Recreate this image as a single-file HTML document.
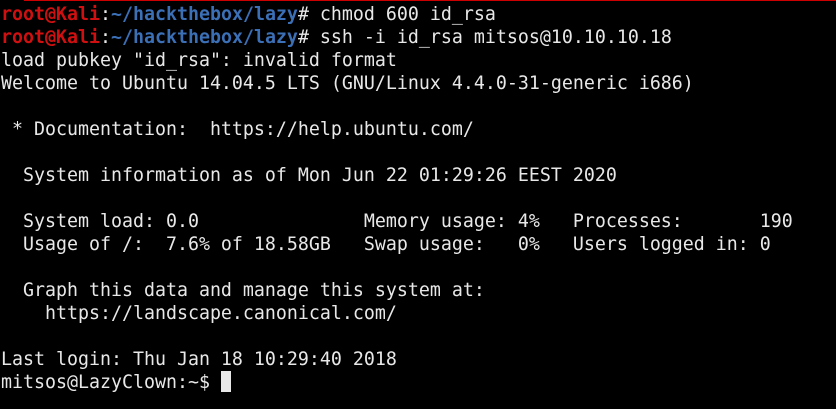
<!DOCTYPE html>
<html><head><style>
html,body{margin:0;padding:0;background:#000;width:836px;height:409px;overflow:hidden}
pre{margin:0;position:absolute;left:1px;top:3px;font-family:"DejaVu Sans Mono","Liberation Mono",monospace;font-size:18.28px;line-height:23px;color:#e8e8e8}
.r{color:#d01010;font-weight:bold}.b{color:#3b6fb6;font-weight:bold}
.c{display:inline-block;width:10px;height:21px;background:#e8e8e8;vertical-align:-4px}
.top{position:absolute;top:0;left:24px;right:0;height:1px;background:#c00}
</style></head><body><div class="top"></div><pre><span class="r">root@Kali</span>:<span class="b">~/hackthebox/lazy</span># chmod 600 id_rsa
<span class="r">root@Kali</span>:<span class="b">~/hackthebox/lazy</span># ssh -i id_rsa mitsos@10.10.10.18
load pubkey "id_rsa": invalid format
Welcome to Ubuntu 14.04.5 LTS (GNU/Linux 4.4.0-31-generic i686)

 * Documentation:  https://help.ubuntu.com/

  System information as of Mon Jun 22 01:29:26 EEST 2020

  System load: 0.0               Memory usage: 4%   Processes:       190
  Usage of /:  7.6% of 18.58GB   Swap usage:   0%   Users logged in: 0

  Graph this data and manage this system at:
    https://landscape.canonical.com/

Last login: Thu Jan 18 10:29:40 2018
mitsos@LazyClown:~$ <span class="c"></span></pre></body></html>
